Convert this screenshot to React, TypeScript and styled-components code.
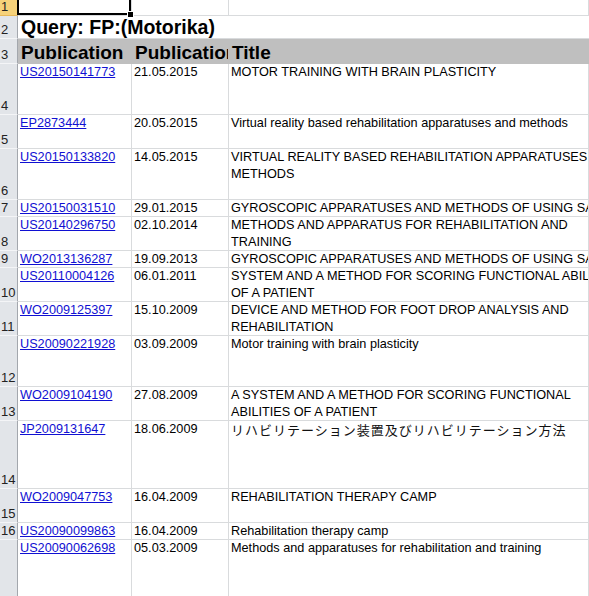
import React from "react";
import styled, { createGlobalStyle } from "styled-components";

const GlobalStyle = createGlobalStyle`
  html, body {
    margin: 0;
    padding: 0;
    background: #ffffff;
    overflow: hidden;
  }
  body {
    font-family: "Liberation Sans", Arial, sans-serif;
    width: 589px;
    height: 596px;
  }
`;

const GRID = "#d9dbdd";
const HEADER_BG = "#e2e5e9";
const HEADER_SEP = "#f4f5f7";
const HEADER_EDGE = "#a3a7ad";

const Sheet = styled.div`
  width: 589px;
  height: 596px;
  overflow: hidden;
  display: flex;
  flex-direction: column;
`;

const Row = styled.div<{ $h: number }>`
  display: grid;
  grid-template-columns: 18px 114px 97px 1fr;
  height: ${(p) => p.$h}px;
  flex: 0 0 ${(p) => p.$h}px;
`;

const RowHead = styled.div<{ $active?: boolean }>`
  box-sizing: border-box;
  background: ${(p) => (p.$active ? "#f6d27a" : HEADER_BG)};
  border-right: 1px solid ${HEADER_EDGE};
  border-bottom: 1px solid ${(p) => (p.$active ? "#e7b95a" : HEADER_SEP)};
  display: flex;
  align-items: flex-end;
  padding-left: 1px;
  font-size: 13px;
  line-height: 17px;
  color: #222;
  overflow: hidden;
  white-space: nowrap;
`;

const Cell = styled.div<{ $fill?: string }>`
  position: relative;
  box-sizing: border-box;
  background: ${(p) => p.$fill ?? "#ffffff"};
  border-right: 1px solid ${(p) => p.$fill ?? GRID};
  border-bottom: 1px solid ${(p) => p.$fill ?? GRID};
  padding-left: 2px;
  font-size: 12.7px;
  line-height: 17px;
  color: #000;
  white-space: nowrap;
  overflow: hidden;
`;

const SpanCell = styled(Cell)`
  grid-column: 2 / 5;
  border-right: none;
  overflow: visible;
  display: flex;
  align-items: flex-end;
  padding-left: 3px;
`;

const HeadCell = styled(Cell)`
  display: flex;
  align-items: flex-end;
  padding-left: 3px;
  font-weight: bold;
  font-size: 19px;
  line-height: 21px;
`;

const QueryText = styled.span`
  font-weight: bold;
  font-size: 19.5px;
  line-height: 21px;
`;

const Link = styled.a`
  color: #1010d2;
  text-decoration: underline;
  text-underline-offset: 1px;
`;

const Line = styled.div`
  white-space: nowrap;
`;

const JpLine = styled.div`
  font-family: "Noto Sans CJK JP", "Liberation Sans", sans-serif;
  font-size: 13px;
  letter-spacing: 1px;
  line-height: 17px;
  color: #111;
  white-space: nowrap;
`;

const SelectedCell = styled(Cell)`
  overflow: visible;
  z-index: 2;
`;

const Selection = styled.div`
  position: absolute;
  left: -1px;
  top: -2px;
  right: 0;
  bottom: 0;
  border: 2px solid #000;
  pointer-events: none;
`;

const FillHandle = styled.div`
  position: absolute;
  right: -2px;
  bottom: -2px;
  width: 5px;
  height: 5px;
  background: #000;
  box-shadow: 0 0 0 1px #fff;
`;

type Entry = {
  h: number;
  id: string;
  date: string;
  title: string[];
  jp?: boolean;
};

const entries: Entry[] = [
  { h: 51, id: "US20150141773", date: "21.05.2015", title: ["MOTOR TRAINING WITH BRAIN PLASTICITY"] },
  { h: 34, id: "EP2873444", date: "20.05.2015", title: ["Virtual reality based rehabilitation apparatuses and methods"] },
  { h: 51, id: "US20150133820", date: "14.05.2015", title: ["VIRTUAL REALITY BASED REHABILITATION APPARATUSES AND", "METHODS"] },
  { h: 17, id: "US20150031510", date: "29.01.2015", title: ["GYROSCOPIC APPARATUSES AND METHODS OF USING SAME"] },
  { h: 34, id: "US20140296750", date: "02.10.2014", title: ["METHODS AND APPARATUS FOR REHABILITATION AND", "TRAINING"] },
  { h: 17, id: "WO2013136287", date: "19.09.2013", title: ["GYROSCOPIC APPARATUSES AND METHODS OF USING SAME"] },
  { h: 34, id: "US20110004126", date: "06.01.2011", title: ["SYSTEM AND A METHOD FOR SCORING FUNCTIONAL ABILITIES", "OF A PATIENT"] },
  { h: 34, id: "WO2009125397", date: "15.10.2009", title: ["DEVICE AND METHOD FOR FOOT DROP ANALYSIS AND", "REHABILITATION"] },
  { h: 51, id: "US20090221928", date: "03.09.2009", title: ["Motor training with brain plasticity"] },
  { h: 34, id: "WO2009104190", date: "27.08.2009", title: ["A SYSTEM AND A METHOD FOR SCORING FUNCTIONAL", "ABILITIES OF A PATIENT"] },
  { h: 68, id: "JP2009131647", date: "18.06.2009", title: ["リハビリテーション装置及びリハビリテーション方法"], jp: true },
  { h: 34, id: "WO2009047753", date: "16.04.2009", title: ["REHABILITATION THERAPY CAMP"] },
  { h: 17, id: "US20090099863", date: "16.04.2009", title: ["Rehabilitation therapy camp"] },
  { h: 80, id: "US20090062698", date: "05.03.2009", title: ["Methods and apparatuses for rehabilitation and training"] },
];

export default function App() {
  return (
    <>
      <GlobalStyle />
      <Sheet>
        <Row $h={16}>
          <RowHead $active>1</RowHead>
          <SelectedCell>
            <Selection />
            <FillHandle />
          </SelectedCell>
          <Cell />
          <Cell />
        </Row>
        <Row $h={23}>
          <RowHead>2</RowHead>
          <SpanCell>
            <QueryText>Query: FP:(Motorika)</QueryText>
          </SpanCell>
        </Row>
        <Row $h={25}>
          <RowHead>3</RowHead>
          <HeadCell $fill="#bfbfbf">Publication</HeadCell>
          <HeadCell $fill="#bfbfbf">Publication Date</HeadCell>
          <HeadCell $fill="#bfbfbf">Title</HeadCell>
        </Row>
        {entries.map((e, i) => (
          <Row key={e.id} $h={e.h}>
            <RowHead>{i === entries.length - 1 ? "" : i + 4}</RowHead>
            <Cell>
              <Link>{e.id}</Link>
            </Cell>
            <Cell>{e.date}</Cell>
            <Cell>
              {e.title.map((t) =>
                e.jp ? <JpLine key={t}>{t}</JpLine> : <Line key={t}>{t}</Line>
              )}
            </Cell>
          </Row>
        ))}
      </Sheet>
    </>
  );
}
